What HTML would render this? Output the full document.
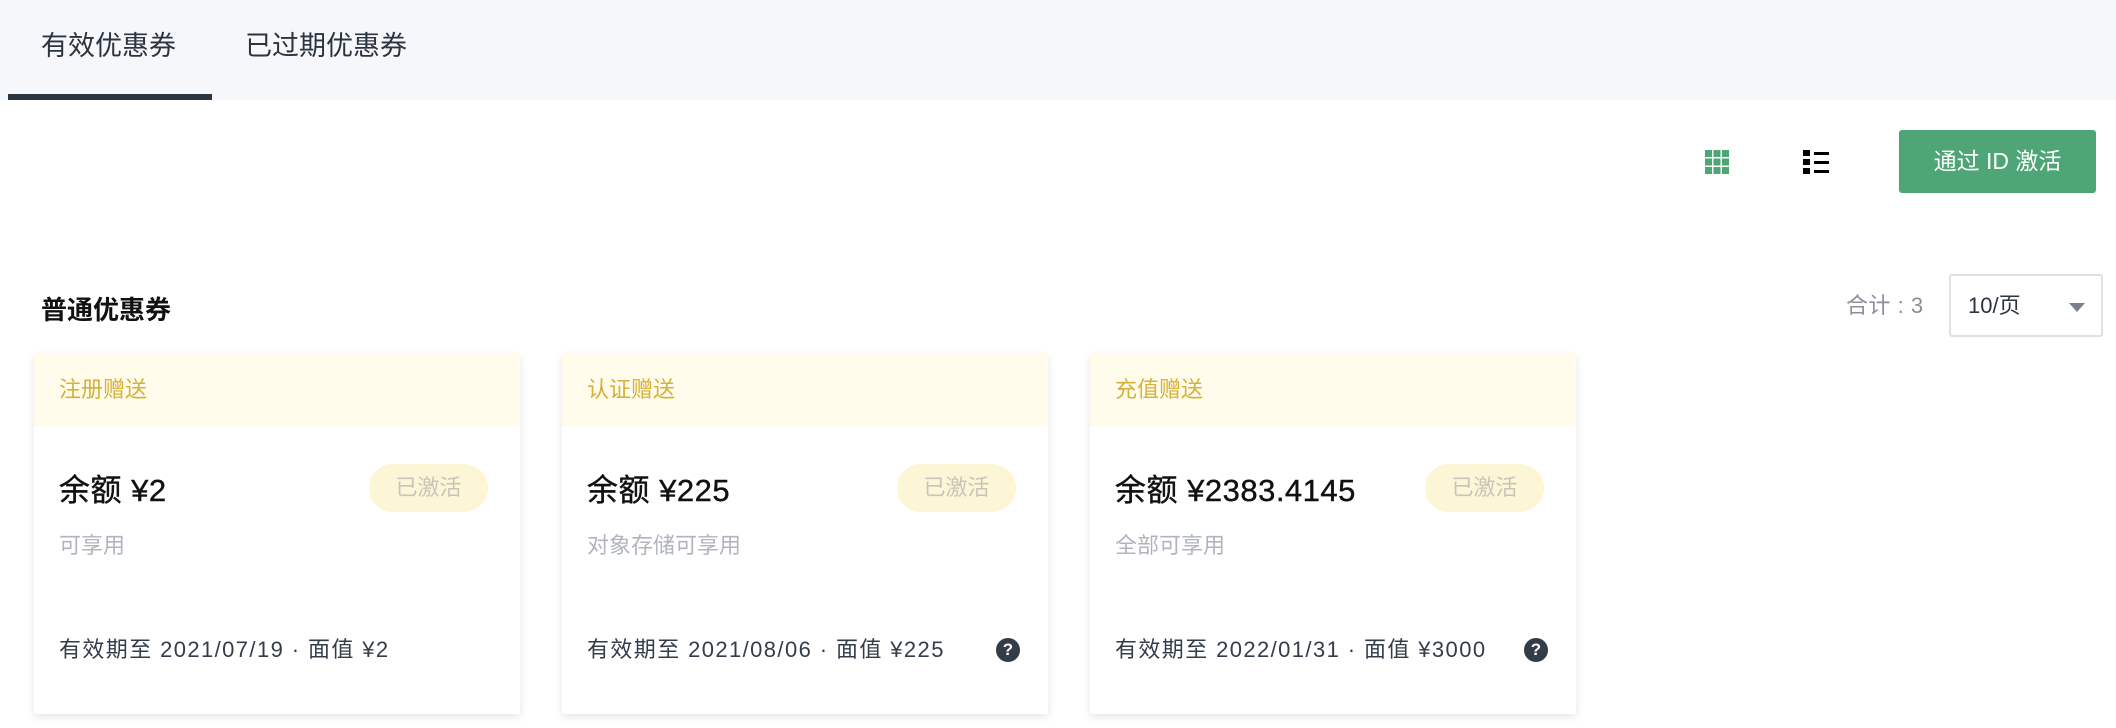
<!DOCTYPE html>
<html><head><meta charset="utf-8"><style>
*{margin:0;padding:0;box-sizing:border-box}
body{width:2116px;height:728px;background:#fff;font-family:"Liberation Sans","Noto Sans CJK SC",sans-serif;position:relative;overflow:hidden;color:#333d4a}
.tabs{position:absolute;left:0;top:0;width:2116px;height:100px;background:#f5f7fa}
.tab{position:absolute;top:28px;font-size:27px;color:#2c3440;line-height:36px}
.ul{position:absolute;left:8px;top:94px;width:204px;height:6px;background:#2c3642}
.abs{position:absolute}
.btn{left:1899px;top:130px;width:197px;height:63px;background:#4ea677;border-radius:3px;color:#fff;font-size:23px;line-height:63px;text-align:center}
.card{position:absolute;top:354px;width:486px;height:360px;background:#fff;box-shadow:0 3px 8px rgba(0,0,0,0.1)}
.hd{height:72px;background:#fffcec;color:#d5b03a;font-size:22px;line-height:72px;padding-left:25px}
.bal{position:absolute;left:25px;top:117px;font-size:31px;color:#111;line-height:40px;letter-spacing:0.5px;-webkit-text-stroke:0.4px #111}
.badge{position:absolute;left:335px;top:110px;width:119px;height:48px;border-radius:24px;background:#fdf6d6;color:#c6c4bd;font-size:22px;line-height:48px;text-align:center}
.sub{position:absolute;left:25px;top:178px;font-size:22px;color:#b0b5bd;line-height:28px}
.ft{position:absolute;left:25px;top:282px;font-size:22px;color:#333d4a;line-height:28px;white-space:nowrap;letter-spacing:1.4px}
.q{position:absolute;top:284px;width:24px;height:24px;border-radius:50%;background:#333d4a;color:#fff;font-size:17px;font-weight:bold;text-align:center;line-height:24px}
</style></head><body>
<div class="tabs">
<div class="tab" style="left:41px">有效优惠券</div>
<div class="tab" style="left:245px">已过期优惠券</div>
<div class="ul"></div>
</div>
<svg class="abs" style="left:1705px;top:150px" width="24" height="24" fill="#4ea677">
<rect x="0" y="0" width="7" height="7"/><rect x="8.5" y="0" width="7" height="7"/><rect x="17" y="0" width="7" height="7"/>
<rect x="0" y="8.5" width="7" height="7"/><rect x="8.5" y="8.5" width="7" height="7"/><rect x="17" y="8.5" width="7" height="7"/>
<rect x="0" y="17" width="7" height="7"/><rect x="8.5" y="17" width="7" height="7"/><rect x="17" y="17" width="7" height="7"/>
</svg>
<svg class="abs" style="left:1803px;top:150px" width="26" height="24" fill="#000">
<rect x="0" y="0" width="7" height="6"/><rect x="0" y="9" width="7" height="6"/><rect x="0" y="18" width="7" height="6"/>
<rect x="11" y="2" width="15" height="3"/><rect x="11" y="11" width="15" height="3"/><rect x="11" y="20" width="15" height="3"/>
</svg>
<div class="abs btn">通过 ID 激活</div>
<div class="abs" style="left:41px;top:292px;font-size:26px;font-weight:bold;color:#111;line-height:36px">普通优惠券</div>
<div class="abs" style="left:1846px;top:291px;font-size:22px;color:#8a9099;line-height:30px;letter-spacing:0.5px">合计 : 3</div>
<div class="abs" style="left:1949px;top:274px;width:154px;height:63px;border:2px solid #dde1e8;border-radius:3px;background:#fff">
<div class="abs" style="left:17px;top:15px;font-size:22px;color:#2c3440;line-height:30px">10/页</div>
<div class="abs" style="left:118px;top:27px;width:0;height:0;border-left:8px solid transparent;border-right:8px solid transparent;border-top:9px solid #7a808a"></div>
</div>

<div class="card" style="left:34px"><div class="hd">注册赠送</div>
<div class="bal">余额 ¥2</div><div class="badge">已激活</div>
<div class="sub">可享用</div><div class="ft">有效期至 2021/07/19 · 面值 ¥2</div></div>

<div class="card" style="left:562px"><div class="hd">认证赠送</div>
<div class="bal">余额 ¥225</div><div class="badge">已激活</div>
<div class="sub">对象存储可享用</div><div class="ft">有效期至 2021/08/06 · 面值 ¥225</div><div class="q" style="left:434px">?</div></div>

<div class="card" style="left:1090px"><div class="hd">充值赠送</div>
<div class="bal">余额 ¥2383.4145</div><div class="badge">已激活</div>
<div class="sub">全部可享用</div><div class="ft">有效期至 2022/01/31 · 面值 ¥3000</div><div class="q" style="left:434px">?</div></div>
</body></html>
